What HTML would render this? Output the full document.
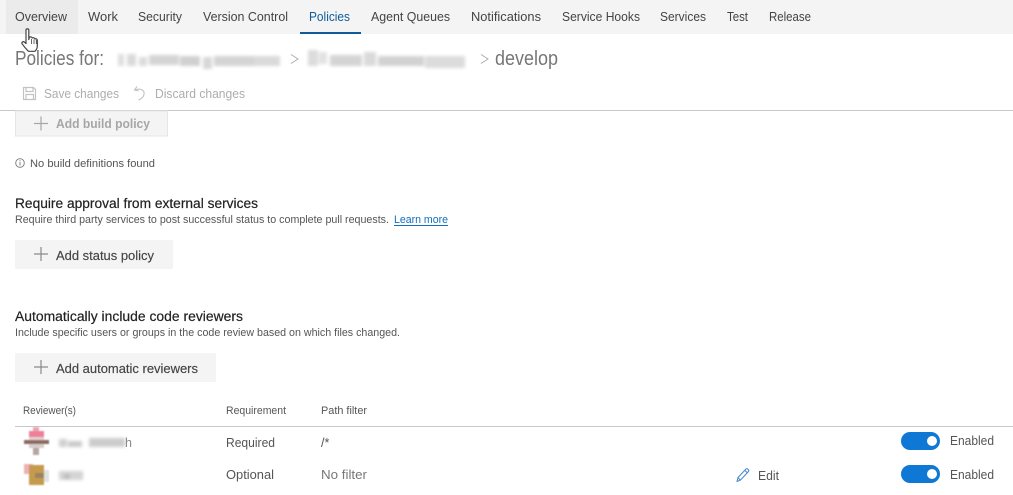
<!DOCTYPE html>
<html lang="en"><head><meta charset="utf-8"><title>Policies</title>
<style>
html,body{margin:0;padding:0;background:#fff;width:1013px;height:495px;overflow:hidden}
svg{display:block}
text{font-family:"Liberation Sans",sans-serif;}
.nav{font-size:12.5px;fill:#444}
.sm{font-size:11px;fill:#555}
.t{font-size:12.5px;fill:#555}
.h{font-size:13.5px;fill:#222}
.b{font-size:12.5px;fill:#444}
</style></head><body>
<svg width="1013" height="495" viewBox="0 0 1013 495" xmlns="http://www.w3.org/2000/svg">
<defs>
<filter id="bl" x="-20%" y="-50%" width="140%" height="200%"><feGaussianBlur stdDeviation="1.500"/></filter>
<filter id="bs" x="-20%" y="-20%" width="140%" height="140%"><feGaussianBlur stdDeviation="0.900"/></filter>
</defs>
<rect width="1013" height="34" fill="#f4f4f4"/>
<rect x="6" y="0" width="72" height="34" fill="#ebebeb"/>
<rect x="300" y="32" width="61" height="2" fill="#0f5c9c"/>
<g class="nav">
<text x="15" y="21" textLength="52" lengthAdjust="spacingAndGlyphs">Overview</text>
<text x="88" y="21" textLength="30" lengthAdjust="spacingAndGlyphs">Work</text>
<text x="138" y="21" textLength="44" lengthAdjust="spacingAndGlyphs">Security</text>
<text x="203" y="21" textLength="85" lengthAdjust="spacingAndGlyphs">Version Control</text>
<text x="309" y="21" textLength="41" lengthAdjust="spacingAndGlyphs" style="fill:#0f5c9c">Policies</text>
<text x="371" y="21" textLength="79" lengthAdjust="spacingAndGlyphs">Agent Queues</text>
<text x="471" y="21" textLength="70" lengthAdjust="spacingAndGlyphs">Notifications</text>
<text x="562" y="21" textLength="78" lengthAdjust="spacingAndGlyphs">Service Hooks</text>
<text x="660" y="21" textLength="46" lengthAdjust="spacingAndGlyphs">Services</text>
<text x="727" y="21" textLength="21" lengthAdjust="spacingAndGlyphs">Test</text>
<text x="769" y="21" textLength="42" lengthAdjust="spacingAndGlyphs">Release</text>
</g>
<!-- hand cursor -->
<path d="M26 30c0-1.500 2.800-1.500 2.800 0v9.500l.6-2.300c1-.6 2.500-.4 2.800.8.9-.6 2.400-.3 2.700.9 1-.4 2.400 0 2.400 1.300v5.800c0 2.300-1.200 4.200-2.400 5.300h-6.500c-1.800-1.800-4-4.300-6.300-7.500-.8-1.500 1.100-2.800 2.300-1.700l1.600 1.500z" fill="#fff" stroke="#444" stroke-width="1.200" stroke-linejoin="round"/>
<path d="M31.500 39v5M34 39.500v4.500M36.300 40v4" stroke="#444" stroke-width=".8" fill="none"/>
<!-- title -->
<text x="15" y="65" style="font-size:20px;fill:#777" textLength="89" lengthAdjust="spacingAndGlyphs">Policies for:</text>
<g filter="url(#bl)" fill="#d6d6d6">
<rect x="118" y="54" width="6" height="12" fill="#dedede"/>
<rect x="127" y="54" width="9" height="12" fill="#dadada"/>
<rect x="139" y="57" width="8" height="9" fill="#dcdcdc"/>
<rect x="149" y="55" width="30" height="10" fill="#d4d4d4"/>
<rect x="180" y="56" width="20" height="10" fill="#d0d0d0"/>
<rect x="203" y="57" width="9" height="12" fill="#d8d8d8"/>
<rect x="214" y="56" width="40" height="10" fill="#d4d4d4"/>
<rect x="254" y="56" width="26" height="10" fill="#dadada"/>
<rect x="308" y="50" width="10" height="16" fill="#dcdcdc"/>
<rect x="319" y="52" width="8" height="12" fill="#e2e2e2"/>
<rect x="330" y="55" width="32" height="11" fill="#d4d4d4"/>
<rect x="364" y="52" width="12" height="14" fill="#dadada"/>
<rect x="378" y="56" width="46" height="10" fill="#d2d2d2"/>
<rect x="425" y="56" width="40" height="12" fill="#dcdcdc"/>
</g>
<path d="M291 54.500l7 4.500-7 4.500M481 54.500l7 4.500-7 4.500" fill="none" stroke="#aaa" stroke-width=".9"/>
<text x="495" y="65" style="font-size:20px;fill:#777" textLength="63" lengthAdjust="spacingAndGlyphs">develop</text>
<!-- toolbar -->
<path d="M23.500 87.500h10l2 2v10h-12zM26 87.500v4h7v-4M26 99.500v-5h7.500v5" fill="none" stroke="#c2c2c2" stroke-width="1.200"/>
<text x="44" y="98" style="font-size:12.500px;fill:#adadad" textLength="75" lengthAdjust="spacingAndGlyphs">Save changes</text>
<path d="M137 86.500l-2.500 3.500 4 1M135 90c5-2 10 0 9 4.500-.5 2.500-3 4.500-5.500 5.500" fill="none" stroke="#c2c2c2" stroke-width="1.100"/>
<text x="155" y="98" style="font-size:12.500px;fill:#adadad" textLength="90" lengthAdjust="spacingAndGlyphs">Discard changes</text>
<rect x="0" y="110" width="1013" height="1" fill="#c8c8c8"/>
<!-- add build policy -->
<rect x="15.500" y="111" width="152" height="25" fill="#f4f4f4" stroke="#e6e6e6"/>
<path d="M41 116.500v14M34 123.500h14" stroke="#a8a8a8" stroke-width="1.200" fill="none"/>
<text x="56" y="128" style="font-size:12.500px;fill:#a6a6a6;font-weight:700" textLength="94" lengthAdjust="spacingAndGlyphs">Add build policy</text>
<circle cx="20" cy="163" r="4.300" fill="none" stroke="#777" stroke-width=".9"/>
<path d="M20 162v3.500M20 160.300v1" stroke="#777" stroke-width=".9"/>
<text x="30" y="167" class="sm" textLength="125" lengthAdjust="spacingAndGlyphs">No build definitions found</text>
<!-- external -->
<text x="15" y="208" class="h" textLength="243" lengthAdjust="spacingAndGlyphs" stroke="#222" stroke-width=".2">Require approval from external services</text>
<text x="15" y="223" class="sm" textLength="374" lengthAdjust="spacingAndGlyphs">Require third party services to post successful status to complete pull requests.</text>
<text x="394" y="223" style="font-size:11px;fill:#106ebe" textLength="54" lengthAdjust="spacingAndGlyphs">Learn more</text>
<rect x="394" y="225" width="54" height="1" fill="#106ebe"/>
<rect x="15" y="240" width="158" height="29" fill="#f4f4f4"/>
<path d="M41 247v14M34 254h14" stroke="#8a8a8a" stroke-width="1.200" fill="none"/>
<text x="56" y="260" class="b" textLength="98" lengthAdjust="spacingAndGlyphs" stroke="#444" stroke-width=".15">Add status policy</text>
<!-- reviewers -->
<text x="15" y="321" class="h" textLength="228" lengthAdjust="spacingAndGlyphs" stroke="#222" stroke-width=".2">Automatically include code reviewers</text>
<text x="15" y="336" class="sm" textLength="385" lengthAdjust="spacingAndGlyphs">Include specific users or groups in the code review based on which files changed.</text>
<rect x="15" y="353" width="201" height="29" fill="#f4f4f4"/>
<path d="M41 360v14M34 367h14" stroke="#8a8a8a" stroke-width="1.200" fill="none"/>
<text x="56" y="373" class="b" textLength="142" lengthAdjust="spacingAndGlyphs" stroke="#444" stroke-width=".15">Add automatic reviewers</text>
<!-- table -->
<text x="23" y="414" class="sm" textLength="53" lengthAdjust="spacingAndGlyphs">Reviewer(s)</text>
<text x="226" y="414" class="sm" textLength="60" lengthAdjust="spacingAndGlyphs">Requirement</text>
<text x="321" y="414" class="sm" textLength="46" lengthAdjust="spacingAndGlyphs">Path filter</text>
<rect x="15" y="426" width="998" height="1" fill="#c8c8c8"/>
<!-- avatar 1 -->
<g filter="url(#bs)">
<rect x="33" y="427" width="6" height="4" fill="#e8a4b0"/>
<rect x="29" y="431" width="15" height="6" fill="#ee7f98"/>
<rect x="29" y="437" width="15" height="3" fill="#e6cfcf"/>
<rect x="24" y="440" width="25" height="4" fill="#8a6a60"/>
<rect x="29" y="444" width="15" height="4" fill="#d8cccc"/>
<rect x="33" y="448" width="6" height="7" fill="#b5a5a5"/>
</g>
<g filter="url(#bl)">
<rect x="59" y="439" width="8" height="8" fill="#d0d0d0"/>
<rect x="68" y="441" width="14" height="6" fill="#cacaca"/>
<rect x="89" y="438" width="36" height="9" fill="#cccccc"/>
</g>
<text x="125" y="447" class="t" style="fill:#888">h</text>
<text x="226" y="447" class="t" textLength="49" lengthAdjust="spacingAndGlyphs">Required</text>
<text x="321" y="447" class="t">/*</text>
<rect x="901" y="432" width="39" height="18" rx="9" fill="#0f78d4"/>
<circle cx="932" cy="441" r="5" fill="#fff"/>
<text x="950" y="445" class="t" textLength="44" lengthAdjust="spacingAndGlyphs">Enabled</text>
<!-- avatar 2 -->
<g filter="url(#bs)">
<rect x="24" y="464" width="9" height="10" fill="#eeb0b5"/>
<rect x="29" y="465" width="15" height="20" fill="#c49a4e"/>
<rect x="44" y="470" width="5" height="12" fill="#e2e2e2"/>
<rect x="35" y="473" width="9" height="5" fill="#9a8460"/>
</g>
<g filter="url(#bl)">
<rect x="59" y="471" width="24" height="9" fill="#d4d4d4"/>
<rect x="64" y="474" width="6" height="5" fill="#bcbcbc"/>
</g>
<text x="226" y="479" class="t" textLength="48" lengthAdjust="spacingAndGlyphs">Optional</text>
<text x="321" y="479" class="t" style="fill:#777" textLength="46" lengthAdjust="spacingAndGlyphs">No filter</text>
<path d="M737 481.500l1-4 8-8.500c1-1 3.500 1 2.500 2.500l-8 8.500zM745 470.500l2.500 2.500M738 477.500l2.500 3" fill="none" stroke="#4f8fcb" stroke-width="1.100" stroke-linejoin="round"/>
<text x="758" y="480" class="t" textLength="21" lengthAdjust="spacingAndGlyphs">Edit</text>
<rect x="901" y="465" width="39" height="18" rx="9" fill="#0f78d4"/>
<circle cx="932" cy="474" r="5" fill="#fff"/>
<text x="950" y="479" class="t" textLength="44" lengthAdjust="spacingAndGlyphs">Enabled</text>
</svg>
</body></html>
